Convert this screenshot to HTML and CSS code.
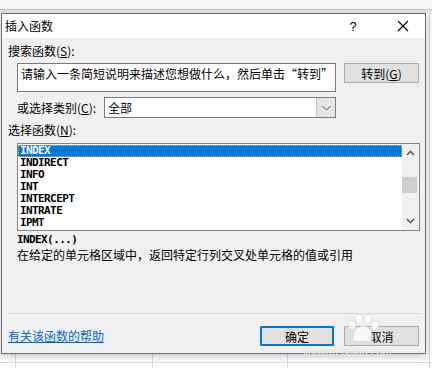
FILE: index.html
```html
<!DOCTYPE html>
<html lang="zh-CN">
<head>
    <meta charset="UTF-8">
    <meta name="viewport" content="width=device-width, initial-scale=1.0">
    <title>插入函数</title>
    <link rel="stylesheet" href="styles.css">
</head>
<body>
    <div class="sheet">
        <div class="dialog">
            <div class="titlebar">
                <span class="title">插入函数</span>
                <span class="help">?</span>
                <span class="close">
                    <svg width="12" height="12" viewBox="0 0 12 12"><path d="M1 1L11 11M11 1L1 11" stroke="#000" stroke-width="1.1" fill="none"/></svg>
                </span>
            </div>
            <div class="content">
                <div class="label">搜索函数(<u>S</u>):</div>
                <div class="search-row">
                    <div class="search-box">请输入一条简短说明来描述您想做什么，然后单击“转到”</div>
                    <button type="button" class="btn go-btn">转到(<u>G</u>)</button>
                </div>
                <div class="category-row">
                    <span class="label">或选择类别(<u>C</u>):</span>
                    <div class="select">
                        <span class="select-value">全部</span>
                        <span class="select-arrow">
                            <svg width="9" height="6" viewBox="0 0 9 6"><path d="M0.5 1L4.5 5L8.5 1" stroke="#555" stroke-width="1" fill="none"/></svg>
                        </span>
                    </div>
                </div>
                <div class="label list-label">选择函数(<u>N</u>):</div>
                <div class="listbox">
                    <ul class="items">
                        <li class="selected">INDEX</li>
                        <li>INDIRECT</li>
                        <li>INFO</li>
                        <li>INT</li>
                        <li>INTERCEPT</li>
                        <li>INTRATE</li>
                        <li>IPMT</li>
                    </ul>
                    <div class="scrollbar">
                        <svg class="arrow" width="9" height="6" viewBox="0 0 9 6"><path d="M1 5L4.5 1.5L8 5" stroke="#606060" stroke-width="1.6" fill="none"/></svg>
                        <div class="track"><div class="thumb"></div></div>
                        <svg class="arrow" width="9" height="6" viewBox="0 0 9 6"><path d="M1 1L4.5 4.5L8 1" stroke="#606060" stroke-width="1.6" fill="none"/></svg>
                    </div>
                </div>
                <div class="syntax">INDEX(...)</div>
                <div class="desc">在给定的单元格区域中，返回特定行列交叉处单元格的值或引用</div>
                <div class="sep"></div>
                <div class="footer">
                    <a class="help-link" href="#">有关该函数的帮助</a>
                    <div class="buttons">
                        <button type="button" class="btn ok-btn">确定</button>
                        <button type="button" class="btn">取消</button>
                    </div>
                </div>
            </div>
            <!-- watermark paw, drawn over the buttons -->
            <svg class="paw" width="34" height="30" viewBox="0 0 34 30">
                <g fill="rgba(255,255,255,0.75)" stroke="rgba(170,170,170,0.5)" stroke-width="0.6">
                    <ellipse cx="6" cy="11" rx="4" ry="5"/>
                    <ellipse cx="13" cy="5" rx="4" ry="4.5"/>
                    <ellipse cx="22" cy="5" rx="4" ry="4.5"/>
                    <ellipse cx="29" cy="11" rx="4" ry="5"/>
                    <path d="M17 12C10 12 6 20 7 25C8 29 13 28 17 27C21 28 26 29 27 25C28 20 24 12 17 12Z"/>
                </g>
            </svg>
        </div>
        <span class="wm-url">jingyan.baidu.com</span>
    </div>
</body>
</html>
```

FILE: styles.css
```css
body {
    margin: 0;
    width: 432px;
    height: 368px;
    overflow: hidden;
    font-family: "Noto Sans CJK SC", sans-serif;
    font-size: 12px;
    color: #000;
    background:
        linear-gradient(#f8f8f8 0 9px, #c6c6c6 9px 10px, #e8e8e8 10px 13px, transparent 13px),
        linear-gradient(to bottom, transparent 362px, #dadada 362px 363px, transparent 363px),
        linear-gradient(to right, transparent 15px, #dadada 15px 16px, transparent 16px 152px, #dadada 152px 153px, transparent 153px 287px, #dadada 287px 288px, transparent 288px 429px, #cfcfcf 429px 430px, transparent 430px),
        #fff;
}
.sheet {
    position: relative;
    padding: 13px 0 0 1px;
}
.dialog {
    position: relative;
    width: 425px;
    height: 341px;
    box-sizing: border-box;
    border: 1px solid #6f6f6f;
    background: #f0f0f0;
    box-shadow: 0 2px 8px rgba(0, 0, 0, 0.25);
}
.titlebar {
    display: flex;
    align-items: center;
    height: 24px;
    background: #fff;
}
.title {
    padding-left: 3px;
    flex: 1;
    line-height: 24px;
}
.help {
    width: 20px;
    margin-right: 34px;
    text-align: center;
    font-family: "Liberation Sans", sans-serif;
    font-size: 13px;
}
.close {
    display: flex;
    margin-right: 16px;
}
.content {
    padding: 0 5px 0 6px;
}
.label {
    line-height: 14px;
}
.content > .label:first-child {
    margin-top: 6px;
}
.search-row {
    display: flex;
    align-items: flex-start;
    gap: 8px;
    margin: 5px 0 0 9px;
}
.search-box {
    width: 319px;
    height: 29px;
    box-sizing: border-box;
    border: 1px solid #7a7a7a;
    background: #fff;
    padding: 3px 0 0 3px;
    line-height: 14px;
    white-space: nowrap;
    overflow: hidden;
}
.btn {
    height: 20px;
    padding: 0;
    box-sizing: border-box;
    border: 1px solid #adadad;
    background: #e1e1e1;
    font-family: "Noto Sans CJK SC", sans-serif;
    font-size: 12px;
    color: #000;
}
.go-btn {
    width: 75px;
}
.category-row {
    display: flex;
    align-items: center;
    margin: 5px 0 0 9px;
}
.category-row .label {
    width: 87px;
}
.select {
    display: flex;
    width: 232px;
    height: 21px;
    box-sizing: border-box;
    border: 1px solid #7a7a7a;
    background: #fff;
}
.select-value {
    flex: 1;
    padding-left: 3px;
    line-height: 19px;
}
.select-arrow {
    width: 18px;
    display: flex;
    align-items: center;
    justify-content: center;
    background: #e5e5e5;
    border-left: 1px solid #c8c8c8;
}
.list-label {
    margin-top: 5px;
}
.listbox {
    display: flex;
    margin: 6px 0 0 9px;
    width: 403px;
    height: 88px;
    box-sizing: border-box;
    border: 1px solid #828790;
    background: #fff;
}
.items {
    flex: 1;
    list-style: none;
    margin: 0;
    padding: 1px 0 0;
    font-family: "DejaVu Sans Mono", monospace;
    font-weight: bold;
    font-size: 11px;
    letter-spacing: -0.6px;
}
.items li {
    height: 12px;
    line-height: 12px;
    padding-left: 2px;
    box-sizing: border-box;
}
.items li.selected {
    background: #0078d7;
    color: #fff;
    outline: 1px dotted #e8a060;
    outline-offset: -1px;
}
.scrollbar {
    width: 17px;
    display: flex;
    flex-direction: column;
    align-items: center;
    background: #f0f0f0;
}
.scrollbar .arrow {
    margin: 6px 0;
}
.track {
    flex: 1;
    width: 100%;
    padding-top: 15px;
}
.thumb {
    width: 15px;
    height: 16px;
    background: #cdcdcd;
}
.syntax {
    margin: 3px 0 0 9px;
    font-family: "DejaVu Sans Mono", monospace;
    font-weight: bold;
    font-size: 11px;
    letter-spacing: -0.6px;
    line-height: 12px;
}
.desc {
    margin: 2px 0 0 9px;
    line-height: 14px;
}
.sep {
    height: 1px;
    margin-top: 51px;
    background: #d6d6d6;
}
.footer {
    display: flex;
    align-items: center;
    justify-content: space-between;
    margin-top: 12px;
}
.help-link {
    color: #0066cc;
    text-decoration: underline;
    line-height: 14px;
}
.buttons {
    display: flex;
    gap: 10px;
    margin-right: 1px;
}
.buttons .btn {
    width: 75px;
}
.buttons .ok-btn {
    width: 74px;
    border: 2px solid #0078d7;
}
.paw {
    position: absolute;
    left: 344px;
    top: 300px;
    pointer-events: none;
}
.wm-url {
    position: absolute;
    left: 303px;
    top: 347px;
    font-family: "Liberation Sans", sans-serif;
    font-size: 11px;
    line-height: 11px;
    color: rgba(255, 255, 255, 0.8);
    text-shadow: 0 0 1px rgba(150, 150, 150, 0.7);
}
```
